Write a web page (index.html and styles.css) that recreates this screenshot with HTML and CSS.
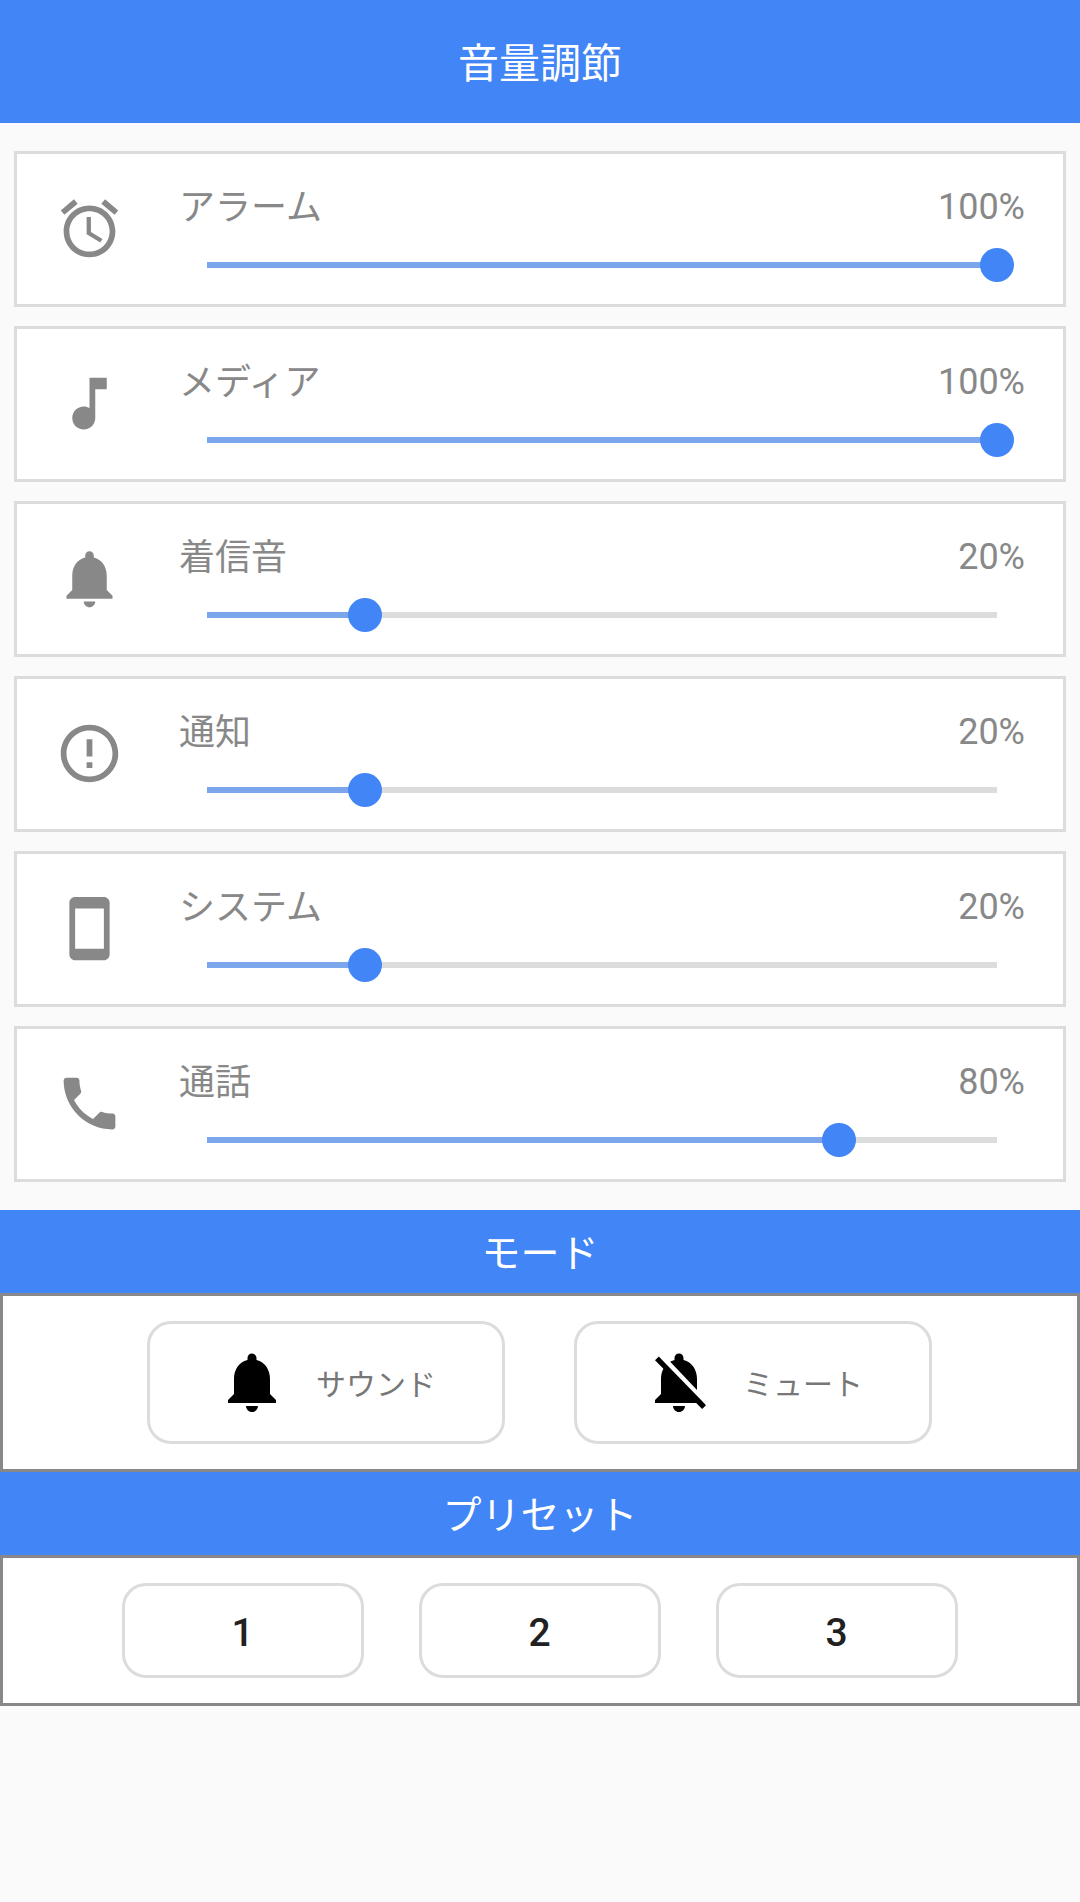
FILE: index.html
```html
<!DOCTYPE html>
<html lang="ja">
<head>
<meta charset="utf-8">
<title>音量調節</title>
<link rel="stylesheet" href="styles.css">
</head>
<body>
<header class="app-bar">音量調節</header>
<main>
  <section class="sliders">
    <div class="card">
      <svg class="icon" viewBox="0 0 24 24"><path d="M22 5.72l-4.6-3.86-1.29 1.53 4.6 3.86L22 5.72zM7.88 3.39L6.6 1.86 2 5.71l1.29 1.53 4.59-3.85zM12.5 8H11v6l4.75 2.85.75-1.23-4-2.37V8zM12 4c-4.97 0-9 4.03-9 9s4.02 9 9 9c4.97 0 9-4.03 9-9s-4.03-9-9-9zm0 16c-3.87 0-7-3.13-7-7s3.13-7 7-7 7 3.13 7 7-3.13 7-7 7z"/></svg>
      <div class="control">
        <div class="caption"><span class="name">アラーム</span><span class="value">100%</span></div>
        <div class="track"><div class="fill" style="width:100%"><span class="thumb"></span></div></div>
      </div>
    </div>
    <div class="card">
      <svg class="icon" viewBox="0 0 24 24"><path d="M12 3v10.55c-.59-.34-1.27-.55-2-.55-2.21 0-4 1.79-4 4s1.79 4 4 4 4-1.79 4-4V7h4V3h-6z"/></svg>
      <div class="control">
        <div class="caption"><span class="name">メディア</span><span class="value">100%</span></div>
        <div class="track"><div class="fill" style="width:100%"><span class="thumb"></span></div></div>
      </div>
    </div>
    <div class="card">
      <svg class="icon" viewBox="0 0 24 24"><path d="M12 22c1.1 0 2-.9 2-2h-4c0 1.1.89 2 2 2zm6-6v-5c0-3.07-1.64-5.64-4.5-6.32V4c0-.83-.67-1.5-1.5-1.5s-1.5.67-1.5 1.5v.68C7.63 5.36 6 7.92 6 11v5l-2 2v1h16v-1l-2-2z"/></svg>
      <div class="control">
        <div class="caption"><span class="name">着信音</span><span class="value">20%</span></div>
        <div class="track"><div class="fill" style="width:20%"><span class="thumb"></span></div></div>
      </div>
    </div>
    <div class="card">
      <svg class="icon" viewBox="0 0 24 24"><path d="M11 15h2v2h-2zm0-8h2v6h-2zm.99-5C6.47 2 2 6.48 2 12s4.47 10 9.99 10C17.52 22 22 17.52 22 12S17.52 2 11.99 2zM12 20c-4.42 0-8-3.58-8-8s3.58-8 8-8 8 3.58 8 8-3.58 8-8 8z"/></svg>
      <div class="control">
        <div class="caption"><span class="name">通知</span><span class="value">20%</span></div>
        <div class="track"><div class="fill" style="width:20%"><span class="thumb"></span></div></div>
      </div>
    </div>
    <div class="card">
      <svg class="icon" viewBox="0 0 24 24"><path d="M17 1.01L7 1c-1.1 0-2 .9-2 2v18c0 1.1.9 2 2 2h10c1.1 0 2-.9 2-2V3c0-1.1-.9-1.99-2-1.99zM17 19H7V5h10v14z"/></svg>
      <div class="control">
        <div class="caption"><span class="name">システム</span><span class="value">20%</span></div>
        <div class="track"><div class="fill" style="width:20%"><span class="thumb"></span></div></div>
      </div>
    </div>
    <div class="card">
      <svg class="icon" viewBox="0 0 24 24"><path d="M6.62 10.79c1.44 2.83 3.76 5.14 6.59 6.59l2.2-2.2c.27-.27.67-.36 1.02-.24 1.12.37 2.33.57 3.57.57.55 0 1 .45 1 1V20c0 .55-.45 1-1 1-9.39 0-17-7.61-17-17 0-.55.45-1 1-1h3.5c.55 0 1 .45 1 1 0 1.25.2 2.45.57 3.57.11.35.03.74-.25 1.02l-2.2 2.2z"/></svg>
      <div class="control">
        <div class="caption"><span class="name">通話</span><span class="value">80%</span></div>
        <div class="track"><div class="fill" style="width:80%"><span class="thumb"></span></div></div>
      </div>
    </div>
  </section>

  <h2 class="section-bar">モード</h2>
  <section class="panel modes">
    <button class="mode">
      <svg class="mode-icon" viewBox="0 0 24 24"><path d="M12 22c1.1 0 2-.9 2-2h-4c0 1.1.89 2 2 2zm6-6v-5c0-3.07-1.64-5.64-4.5-6.32V4c0-.83-.67-1.5-1.5-1.5s-1.5.67-1.5 1.5v.68C7.63 5.36 6 7.92 6 11v5l-2 2v1h16v-1l-2-2z"/></svg>
      <span>サウンド</span>
    </button>
    <button class="mode">
      <svg class="mode-icon" viewBox="0 0 24 24"><path d="M20 18.69L7.84 6.14 5.27 3.49 4 4.76l2.8 2.8v.01c-.52.99-.8 2.16-.8 3.42v5l-2 2v1h13.73l2 2L21 19.72l-1-1.03zM12 22c1.11 0 2-.89 2-2h-4c0 1.11.89 2 2 2zm6-7.32V11c0-3.08-1.64-5.64-4.5-6.32V4c0-.83-.67-1.5-1.5-1.5s-1.5.67-1.5 1.5v.68c-.15.03-.29.08-.42.12-.1.03-.2.07-.3.11h-.01c-.01 0-.01 0-.02.01-.23.09-.46.2-.68.31 0 0-.01 0-.01.01L18 14.68z"/></svg>
      <span>ミュート</span>
    </button>
  </section>

  <h2 class="section-bar">プリセット</h2>
  <section class="panel presets">
    <button class="preset">1</button>
    <button class="preset">2</button>
    <button class="preset">3</button>
  </section>
</main>
</body>
</html>
```
FILE: styles.css
```css
* {
  box-sizing: border-box;
}

body {
  margin: 0;
  min-height: 1902px;
  background: #fafafa;
  color: #888;
  font-family: Roboto, "Noto Sans CJK JP", sans-serif;
}

.app-bar {
  height: 123px;
  padding-top: 6px;
  background: #4285f6;
  color: #fff;
  font-size: 41px;
  line-height: 117px;
  text-align: center;
}

.sliders {
  display: flex;
  flex-direction: column;
  gap: 19px;
  padding: 28px 14px;
}

.card {
  display: flex;
  height: 156px;
  padding: 0 38px;
  border: 3px solid #dcdcdc;
  background: #fff;
}

.icon {
  flex: none;
  align-self: center;
  width: 69px;
  height: 69px;
  margin-top: -1px;
  fill: #888;
}

.control {
  flex: 1;
  margin-left: 55px;
  padding-top: 27px;
}

.caption {
  display: flex;
  justify-content: space-between;
  height: 52px;
  font-size: 36px;
  line-height: 52px;
}

.name {
  padding-top: 1px;
}

.track {
  width: 790px;
  height: 6px;
  margin: 29px 0 0 28px;
  background: #dcdcdc;
}

.fill {
  position: relative;
  height: 6px;
  background: #7ba6ec;
}

.thumb {
  position: absolute;
  top: -14px;
  right: -17px;
  width: 34px;
  height: 34px;
  border-radius: 50%;
  background: #4285f6;
}

.section-bar {
  height: 83px;
  margin: 0;
  padding-top: 5px;
  background: #4285f6;
  color: #fff;
  font-size: 39px;
  font-weight: 400;
  line-height: 78px;
  text-align: center;
}

.panel {
  display: flex;
  justify-content: center;
  padding: 25px 1px 25px 0;
  border: 3px solid #888;
  background: #fff;
}

button {
  display: flex;
  align-items: center;
  justify-content: center;
  margin: 0;
  padding: 0;
  border: 3px solid #dcdcdc;
  border-radius: 24px;
  background: #fff;
  font-family: inherit;
}

.modes {
  gap: 69px;
}

.mode {
  justify-content: flex-start;
  width: 358px;
  height: 123px;
  padding: 0 0 2px 66px;
  color: #777;
  font-size: 30px;
}

.mode-icon {
  width: 72px;
  height: 72px;
  margin-right: 28px;
  fill: #000;
}

.presets {
  gap: 55px;
}

.preset {
  width: 242px;
  height: 95px;
  padding-top: 4px;
  color: #212121;
  font-size: 39px;
  font-weight: 500;
}
```
